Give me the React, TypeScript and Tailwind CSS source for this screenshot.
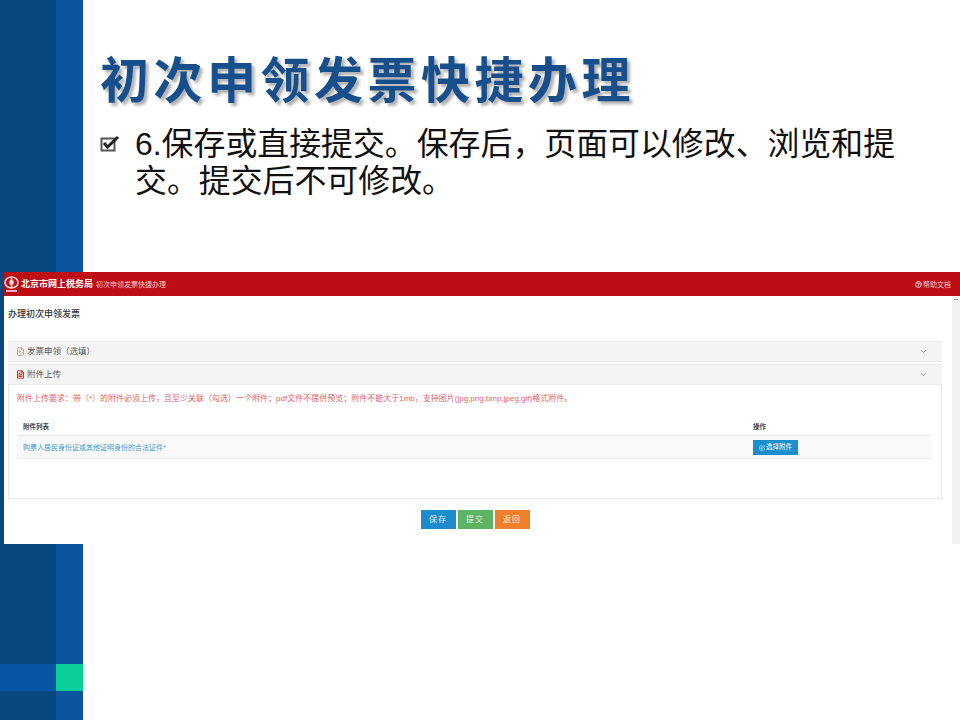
import { ChevronDown, CircleHelp, SquarePen, FileText, FileImage } from "lucide-react"

const cjk = "font-['Liberation_Sans','Noto_Sans_CJK_SC',sans-serif]"

function CheckBullet() {
  return (
    <svg width="20" height="18" viewBox="0 0 20 18" className="shrink-0">
      <rect x="1.5" y="4.5" width="13" height="12" fill="#fff" stroke="#555" strokeWidth="2" />
      <path d="M4 9l3.5 4L18 3" fill="none" stroke="#222" strokeWidth="3" />
    </svg>
  )
}

function Logo() {
  return (
    <svg width="15" height="17" viewBox="0 0 15 17" className="shrink-0">
      <ellipse cx="7.5" cy="6.5" rx="6.5" ry="5.5" fill="none" stroke="#f6dcdc" strokeWidth="1.6" />
      <circle cx="7.5" cy="6.5" r="2.4" fill="#f6dcdc" />
      <rect x="6.7" y="2" width="1.6" height="10" fill="#f6dcdc" />
      <rect x="2" y="14" width="11" height="2" fill="#e9b4b4" />
    </svg>
  )
}

function PanelHead({ label, open }: { label: string; open?: boolean }) {
  return (
    <div className="flex h-[21px] items-center border-t border-b border-[#e9e9e9] bg-[#f4f4f4] pl-2 pr-[14px]">
      {open ? (
        <FileText className="mr-[2px] h-[9px] w-[9px] text-[#c8413f]" strokeWidth={3} />
      ) : (
        <FileImage className="mr-[2px] h-[9px] w-[9px] text-[#d08080]" strokeWidth={2} />
      )}
      <span className="text-[8.5px] leading-none text-[#555]">{label}</span>
      <ChevronDown className="ml-auto h-[9px] w-[9px] text-[#777]" strokeWidth={2} />
    </div>
  )
}

export default function App() {
  return (
    <div className={`relative flex h-[720px] w-[960px] overflow-hidden bg-white ${cjk}`}>
      {/* slide side bar */}
      <div className="flex w-[83px] shrink-0 flex-col">
        <div className="flex h-[664px] shrink-0">
          <div className="w-[56px] bg-[#08487f]" />
          <div className="w-[27px] bg-[#0b55a0]" />
        </div>
        <div className="flex h-[27px] shrink-0">
          <div className="w-[56px] bg-[#0855a5]" />
          <div className="w-[27px] bg-[#09cf98]" />
        </div>
        <div className="flex flex-1">
          <div className="w-[56px] bg-[#08487f]" />
          <div className="w-[27px] bg-[#0b55a0]" />
        </div>
      </div>

      {/* slide body */}
      <div className="flex-1 pl-[17px] pt-[51px]">
        <h1 className="text-[49px] font-bold leading-[60px] tracking-[4.5px] whitespace-nowrap text-[#164f8c] [text-shadow:3px_3px_3px_rgba(60,60,60,0.4)]">
          初次申领发票快捷办理
        </h1>
        <div className="mt-[15px] flex items-start">
          <div className="mt-[8px] w-[35px] shrink-0">
            <CheckBullet />
          </div>
          <p className="w-[770px] text-[31.9px] leading-[37px] text-[#111]">
            6.保存或直接提交。保存后，页面可以修改、浏览和提交。提交后不可修改。
          </p>
        </div>
      </div>

      {/* screenshot pasted over the slide */}
      <div className="absolute left-[4px] top-[272px] flex h-[272px] w-[956px] flex-col bg-white">
        <div className="flex h-[24px] shrink-0 items-center bg-[#bf0d15] pr-[9px] text-white">
          <Logo />
          <span className="ml-[2px] text-[9px] font-bold leading-none">北京市网上税务局</span>
          <span className="ml-[3px] text-[7px] leading-none text-[#f3caca]">初次申领发票快捷办理</span>
          <CircleHelp className="ml-auto mr-[1px] h-[7px] w-[7px]" strokeWidth={3} />
          <span className="text-[7px] leading-none text-[#f3caca]">帮助文档</span>
        </div>

        <div className="flex min-h-0 flex-1">
          <div className="min-w-0 flex-1 pl-[4px] pr-[10px]">
            <div className="pt-[12px] text-[9px] font-medium leading-[12px] text-[#333]">办理初次申领发票</div>
            <div className="mt-[21px]">
              <PanelHead label="发票申领（选填）" />
            </div>
            <div className="mt-[2px]">
              <PanelHead label="附件上传" open />
            </div>
            <div className="h-[114px] border-x border-b border-[#e6e6e6] px-[8px]">
              <p className="pt-[8px] text-[8px] leading-[12px] whitespace-nowrap text-[#e0636b]">
                附件上传要求：带（*）的附件必须上传，且至少关联（勾选）一个附件；pdf文件不提供预览；附件不能大于1mb，支持图片(jpg,png,bmp,jpeg,gif)格式附件。
              </p>
              <div className="mr-[2px] mt-[14px]">
                <div className="flex h-[17px] items-center border-b border-[#e8e8e8] pl-[6px] text-[6.5px] font-bold text-[#444]">
                  <span className="w-[730px]">附件列表</span>
                  <span>操作</span>
                </div>
                <div className="flex h-[23px] items-center border-b border-[#ececec] bg-[#f9f9f9] pl-[6px]">
                  <span className="w-[730px] text-[7px] leading-none whitespace-nowrap text-[#3f9ad0]">
                    购票人居民身份证或其他证明身份的合法证件*
                  </span>
                  <button className="mt-[1px] flex h-[15px] w-[45px] items-center justify-center gap-[1px] bg-[#1b8fcb] text-[6.5px] leading-none text-white">
                    <SquarePen className="h-[6px] w-[6px]" />
                    选择附件
                  </button>
                </div>
              </div>
            </div>
            <div className="mt-[11px] flex justify-center gap-[2px]">
              <button className="h-[19px] w-[35px] bg-[#1c8ccc] text-[8px] tracking-[1px] text-[#dff0fa]">保存</button>
              <button className="h-[19px] w-[35px] bg-[#5cb463] text-[8px] tracking-[1px] text-[#e4f5e6]">提交</button>
              <button className="h-[19px] w-[35px] bg-[#f0802a] text-[8px] tracking-[1px] text-[#fde9d8]">返回</button>
            </div>
          </div>
          <div className="flex w-[8px] shrink-0 justify-center bg-[#f1f1f1] pt-[3px]">
            <div className="h-[1px] w-[4px] bg-[#999]" />
          </div>
        </div>
      </div>
    </div>
  )
}
